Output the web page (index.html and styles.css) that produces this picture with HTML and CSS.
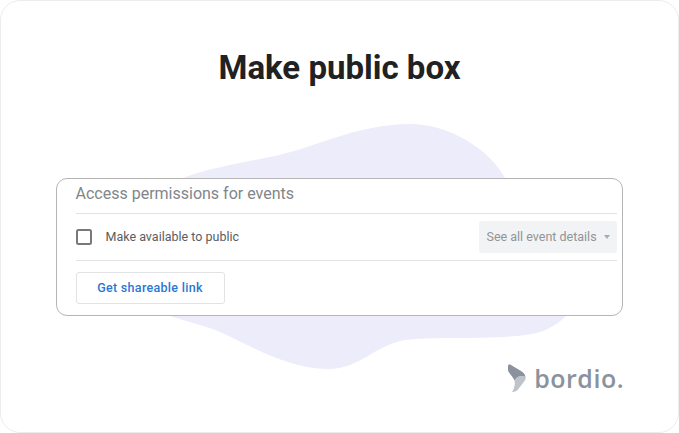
FILE: index.html
```html
<!DOCTYPE html>
<html lang="en">
<head>
<meta charset="utf-8">
<title>Make public box</title>
<link rel="stylesheet" href="styles.css">
</head>
<body>
<main class="frame">
  <svg class="blob" width="679" height="433" viewBox="0 0 679 433" aria-hidden="true">
    <path d="M160 190 C185 172 230 165 270 157 C310 150 355 124 410 124 C450 124 490 150 505 178 C520 205 575 230 578 275 C580 300 570 322 540 332 C510 341 440 336 405 340 C375 345 360 369 328 369 C285 369 245 342 215 330 C185 318 130 312 115 280 C100 250 130 212 160 190 Z"/>
  </svg>
  <h1 class="title">Make public box</h1>
  <section class="card">
    <h2 class="card-title">Access permissions for events</h2>
    <div class="row">
      <span class="checkbox"></span>
      <span class="label">Make available to public</span>
      <span class="select">See all event details<i class="caret"></i></span>
    </div>
    <div class="actions">
      <button class="link-btn" type="button">Get shareable link</button>
    </div>
  </section>
  <footer class="brand">
    <svg class="brand-mark" width="20" height="30" viewBox="0 0 20 30" aria-hidden="true">
      <path class="mark-light" d="M18.500 14 C18.800 15.500 18.500 16.500 17.500 18 L11 26.500 C10 28 8 29 5 29 C7.500 25 8.500 21 7.500 17.500 C10 13 15 12 18.500 14 Z"/>
      <path class="mark-dark" d="M1 3 C1 1.500 2.500 1.200 4 2 L14 8 C16.500 9.500 18 11 18.500 14 C15 12 10 13 7.500 17.500 C6 14 3 11 1.700 9 C1 8 1 7 1 6 Z"/>
    </svg>
    <span class="brand-name">bordio.</span>
  </footer>
</main>
</body>
</html>
```
FILE: styles.css
```css
* { box-sizing: border-box; }
html, body { margin: 0; padding: 0; background: #fff; }
.frame {
  position: relative;
  width: 679px;
  height: 433px;
  border: 1px solid #ececec;
  border-radius: 20px;
  background: #fff;
  overflow: hidden;
  display: flex;
  flex-direction: column;
  align-items: center;
}
.blob { position: absolute; left: -1px; top: -1px; }
.blob path { fill: #edecfa; }
.title {
  position: relative;
  margin: 47px 0 0;
  font: 700 33px/40px Roboto, sans-serif;
  color: #212121;
}
.card {
  position: relative;
  width: 567px;
  height: 138px;
  margin-top: 90px;
  margin-left: -1px;
  padding: 0 5px 0 19px;
  border: 1px solid #b5b5b5;
  border-radius: 11px;
  background: #fff;
}
.card-title {
  margin: 0;
  height: 35px;
  font: 400 16px/30px Roboto, sans-serif;
  color: #80868b;
  border-bottom: 1px solid #e3e3e3;
}
.row {
  display: flex;
  align-items: center;
  height: 47px;
  border-bottom: 1px solid #e3e3e3;
}
.checkbox {
  width: 16px;
  height: 16px;
  border: 2px solid #77797d;
  border-radius: 2.500px;
}
.label {
  margin-left: 14px;
  font: 400 12.500px/16px Roboto, sans-serif;
  color: #5a5d61;
}
.select {
  display: flex;
  align-items: center;
  margin-left: auto;
  width: 138px;
  height: 32px;
  padding-left: 8px;
  border-radius: 3px;
  background: #f1f3f4;
  font: 400 12.500px/16px Roboto, sans-serif;
  color: #919498;
}
.caret {
  margin-left: 7px;
  border: 3.500px solid transparent;
  border-top: 4px solid #a8abaf;
  border-bottom: 0;
}
.actions { padding-top: 11px; }
.link-btn {
  display: block;
  width: 149px;
  height: 32px;
  padding: 0;
  border: 1px solid #e1e3e6;
  border-radius: 3px;
  background: #fff;
  font: 500 12.500px/16px Roboto, sans-serif;
  letter-spacing: 0.300px;
  color: #2a78d4;
}
.brand {
  position: relative;
  display: flex;
  align-items: center;
  align-self: flex-end;
  margin: 47px 54px 0 0;
  height: 30px;
}
.brand-mark { display: block; }
.brand-name {
  margin-left: 7px;
  font: 600 25px/30px "Open Sans", sans-serif;
  letter-spacing: 0.500px;
  color: #8b929e;
}
.mark-dark { fill: #8b929e; }
.mark-light { fill: #bfc3ca; }
```
